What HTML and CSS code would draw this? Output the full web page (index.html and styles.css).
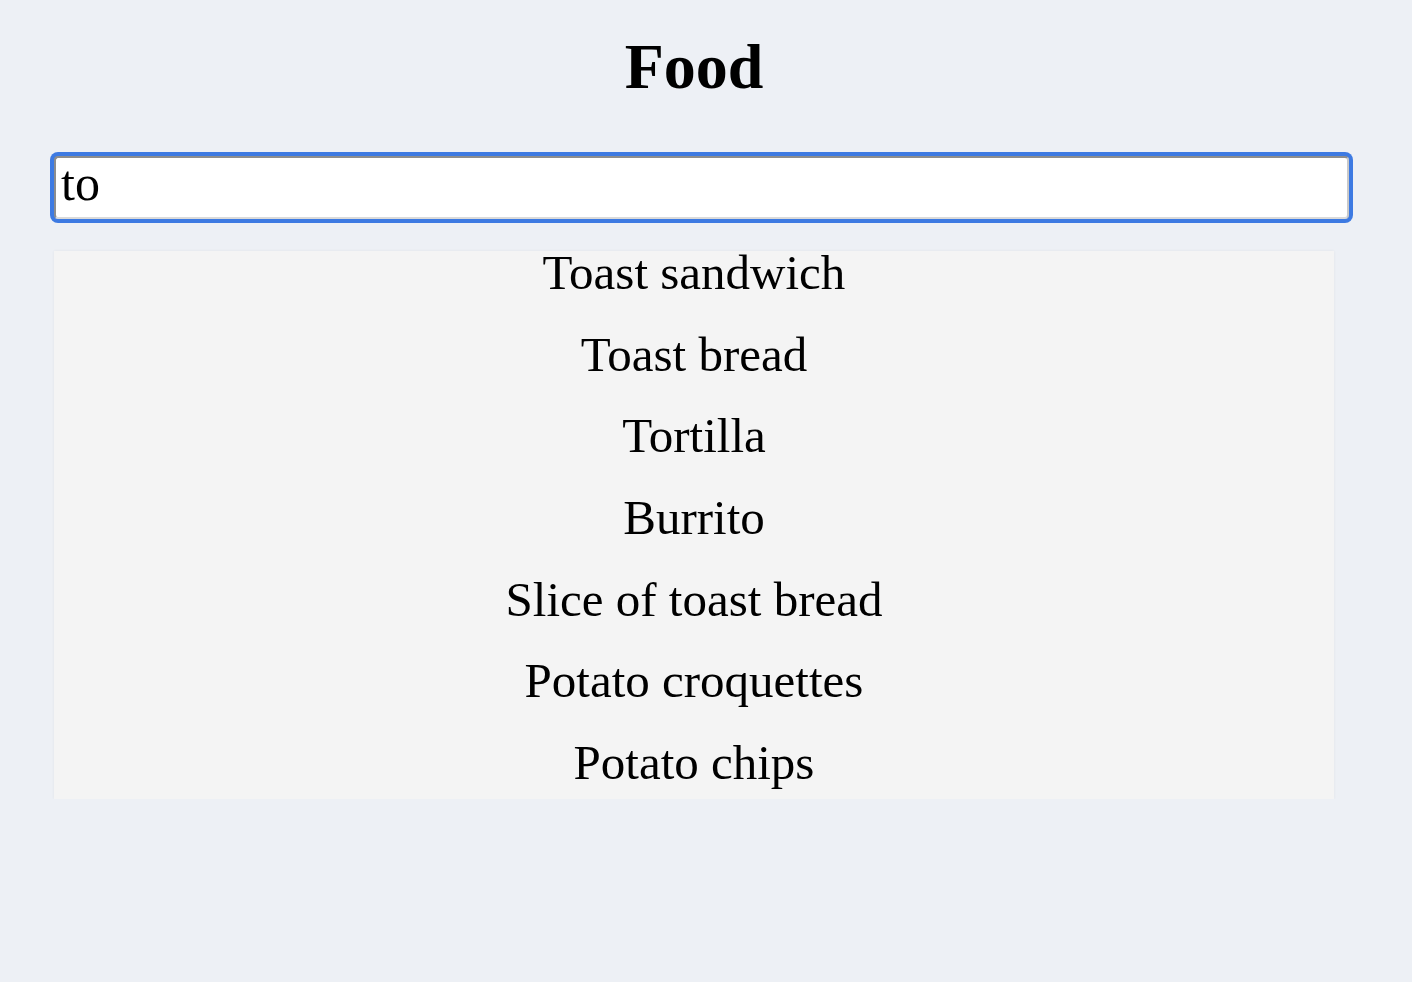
FILE: index.html
```html
<!DOCTYPE html>
<html lang="en">
<head>
<meta charset="utf-8">
<title>Food</title>
<link rel="stylesheet" href="styles.css">
</head>
<body>
<main class="app">
  <h1 class="title">Food</h1>
  <input class="search" id="search" type="text" value="to" autofocus>
  <ul class="results">
    <li class="result">Toast sandwich</li>
    <li class="result">Toast bread</li>
    <li class="result">Tortilla</li>
    <li class="result">Burrito</li>
    <li class="result">Slice of toast bread</li>
    <li class="result">Potato croquettes</li>
    <li class="result">Potato chips</li>
  </ul>
</main>
<script src="app.js"></script>
</body>
</html>
```

FILE: styles.css
```css
html, body {
  margin: 0;
  padding: 0;
  background: #edf0f5;
}

body {
  font-family: "Liberation Serif", "Times New Roman", serif;
  color: #000;
}

.app {
  width: 1280px;
  margin-left: 54px;
  display: flex;
  flex-direction: column;
}

.title {
  margin: 30px 0 52px;
  font-size: 64px;
  line-height: 74px;
  font-weight: bold;
  text-align: center;
}

.search {
  box-sizing: border-box;
  width: 1295px;
  height: 63px;
  margin: 0;
  padding: 2px 2px 12px 5px;
  font-family: "Liberation Serif", "Times New Roman", serif;
  font-size: 50px;
  line-height: 45px;
  color: #000;
  caret-color: #000;
  background: #fff;
  border: 2px solid;
  border-color: #8d8d8d #c9c9c9 #dadada #8d8d8d;
  border-radius: 4px;
  box-shadow: 0 0 0 4px #3d7ae2;
  outline: none;
}

.results {
  list-style: none;
  margin: 32px 0 0;
  padding: 0 0 14px;
  background: #f4f4f4;
  box-shadow: 0 0 3px rgba(0, 0, 0, 0.06);
  display: flex;
  flex-direction: column;
  gap: 37.67px;
}

.result {
  font-size: 49px;
  line-height: 44px;
  text-align: center;
}
```

FILE: app.js
```js
var s = document.getElementById('search');
s.focus();
s.setSelectionRange(2, 2);
```
